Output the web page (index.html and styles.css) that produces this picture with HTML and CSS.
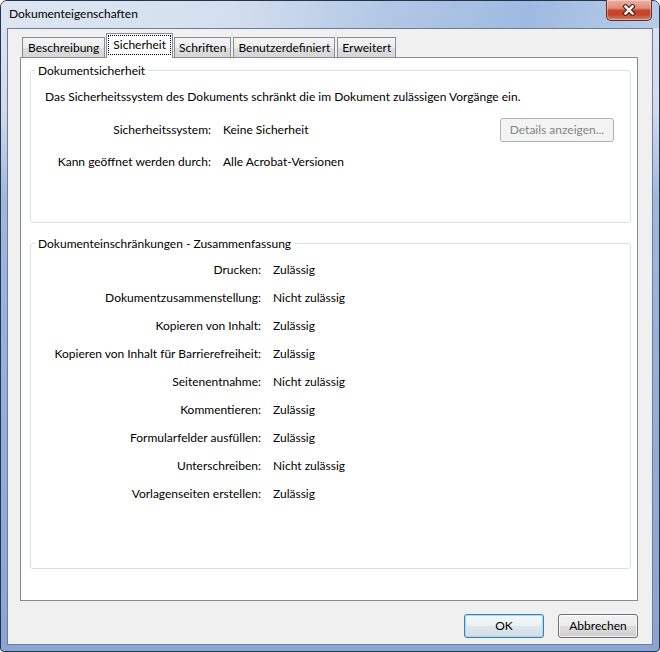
FILE: index.html
```html
<!DOCTYPE html>
<html lang="de">
<head>
    <meta charset="UTF-8">
    <meta name="viewport" content="width=device-width, initial-scale=1.0">
    <title>Dokumenteigenschaften</title>
    <link rel="stylesheet" href="styles.css">
</head>
<body>
    <div class="window">
        <div class="titlebar">
            <span class="title">Dokumenteigenschaften</span>
            <button class="close" aria-label="Schließen">
                <svg width="14" height="12" viewBox="0 0 14 12">
                    <path d="M3.5 2.5 L10.5 9.5 M10.5 2.5 L3.5 9.5" stroke="#5a2216" stroke-width="4.6" stroke-linecap="square"/>
                    <path d="M3.5 2.5 L10.5 9.5 M10.5 2.5 L3.5 9.5" stroke="#ffffff" stroke-width="2.4" stroke-linecap="square"/>
                </svg>
            </button>
        </div>

        <div class="client">
            <div class="tabs">
                <div class="tab">Beschreibung</div>
                <div class="tab active"><span class="focus">Sicherheit</span></div>
                <div class="tab">Schriften</div>
                <div class="tab">Benutzerdefiniert</div>
                <div class="tab">Erweitert</div>
            </div>

            <div class="panel">
                <div class="group group-security">
                    <span class="group-title">Dokumentsicherheit</span>
                    <p class="intro">Das Sicherheitssystem des Dokuments schränkt die im Dokument zulässigen Vorgänge ein.</p>
                    <div class="sec-grid">
                        <span class="label">Sicherheitssystem:</span>
                        <span>Keine Sicherheit</span>
                        <button class="details" disabled>Details anzeigen...</button>
                        <span class="label">Kann geöffnet werden durch:</span>
                        <span>Alle Acrobat-Versionen</span>
                    </div>
                </div>

                <div class="group group-summary">
                    <span class="group-title">Dokumenteinschränkungen - Zusammenfassung</span>
                    <div class="sum-grid">
                        <span class="label">Drucken:</span><span>Zulässig</span>
                        <span class="label">Dokumentzusammenstellung:</span><span>Nicht zulässig</span>
                        <span class="label">Kopieren von Inhalt:</span><span>Zulässig</span>
                        <span class="label">Kopieren von Inhalt für Barrierefreiheit:</span><span>Zulässig</span>
                        <span class="label">Seitenentnahme:</span><span>Nicht zulässig</span>
                        <span class="label">Kommentieren:</span><span>Zulässig</span>
                        <span class="label">Formularfelder ausfüllen:</span><span>Zulässig</span>
                        <span class="label">Unterschreiben:</span><span>Nicht zulässig</span>
                        <span class="label">Vorlagenseiten erstellen:</span><span>Zulässig</span>
                    </div>
                </div>
            </div>

            <div class="footer">
                <button class="btn default">OK</button>
                <button class="btn">Abbrechen</button>
            </div>
        </div>
    </div>
</body>
</html>
```

FILE: styles.css
```css
* {
    box-sizing: border-box;
}

body {
    margin: 0;
    width: 660px;
    height: 652px;
    overflow: hidden;
    font-family: Lato, "Open Sans", sans-serif;
    font-size: 12px;
    line-height: 16px;
    color: #000;
    background: #fff;
}

.window {
    width: 660px;
    height: 652px;
    display: flex;
    flex-direction: column;
    padding: 0 6px 6px 6px;
    border: 1px solid #243449;
    border-radius: 7px 7px 4px 4px;
    background: linear-gradient(to bottom, #dce6f2 0, #cfdbec 110px, #9fb7dd 200px, #8aa5d3 100%);
}

.titlebar {
    height: 27px;
    margin: 0 -6px;
    padding: 0 7px 0 8px;
    display: flex;
    justify-content: space-between;
    align-items: flex-start;
    border-radius: 6px 6px 0 0;
    background: linear-gradient(100deg, #dde7f3 0%, #d3dfee 35%, #b0c6e5 60%, #9fbae1 80%, #b8cce8 100%);
}

.title {
    padding-top: 5px;
}

.close {
    width: 46px;
    height: 21px;
    margin-top: -1px;
    padding: 0;
    display: flex;
    justify-content: center;
    align-items: center;
    border: 1px solid #6a2b20;
    border-top: none;
    border-radius: 0 0 5px 5px;
    background: linear-gradient(to bottom, #eab1a3 0, #df8f79 40%, #c8472c 52%, #c2432a 72%, #d9806a 100%);
    box-shadow: inset 0 0 0 1px rgba(255, 255, 255, 0.35);
}

.client {
    flex: 1;
    display: flex;
    flex-direction: column;
    padding: 4px 14px 0 12px;
    border: 1px solid #6b7d98;
    background: #f0f0f0;
}

/* tab strip */
.tabs {
    height: 24px;
    padding-left: 2px;
    display: flex;
    align-items: flex-end;
}

.tab {
    height: 20px;
    padding: 0 4px;
    margin-right: 2px;
    border: 1px solid #898c95;
    border-bottom: none;
    line-height: 19px;
    background: linear-gradient(to bottom, #f5f5f5 0, #ececec 50%, #dedede 51%, #d6d6d6 100%);
    white-space: nowrap;
}

.tab:first-child {
    padding: 0 5px;
}

.tab.active {
    position: relative;
    z-index: 1;
    height: 25px;
    margin: 0 1px -1px -1px;
    padding: 0 1px;
    background: #fff;
}

.tab.active .focus {
    display: block;
    height: 20px;
    margin-top: 1px;
    padding: 0 4px;
    line-height: 18px;
    border: 1px dotted #000;
}

/* tab page */
.panel {
    height: 544px;
    flex: none;
    padding: 12px 6px 0 9px;
    border: 1px solid #898c95;
    background: #fff;
}

.group {
    position: relative;
    border: 1px solid #d5dfe5;
    border-radius: 3px;
}

.group-title {
    position: absolute;
    top: -8px;
    left: 4px;
    padding: 0 3px;
    background: #fff;
    white-space: nowrap;
}

.group-security {
    height: 153px;
    padding: 18px 16px 0 14px;
}

.intro {
    margin: 0;
}

.sec-grid {
    display: grid;
    grid-template-columns: 166px auto 1fr;
    column-gap: 12px;
    row-gap: 12px;
    align-items: center;
    margin-top: 13px;
}

.label {
    text-align: right;
    white-space: nowrap;
}

.details {
    justify-self: end;
    width: 114px;
    height: 24px;
    padding: 0;
    font: inherit;
    color: #838383;
    border: 1px solid #adb2b5;
    border-radius: 3px;
    background: #f4f4f4;
}

.group-summary {
    height: 326px;
    margin-top: 20px;
    padding: 18px 0 0 14px;
}

.sum-grid {
    display: grid;
    grid-template-columns: 216px 1fr;
    column-gap: 12px;
    row-gap: 12px;
}

/* dialog buttons */
.footer {
    display: flex;
    justify-content: flex-end;
    gap: 14px;
    margin-top: 13px;
}

.btn {
    width: 80px;
    height: 24px;
    padding: 0;
    font: inherit;
    color: #000;
    border: 1px solid #707070;
    border-radius: 3px;
    background: linear-gradient(to bottom, #f2f2f2 0, #ebebeb 50%, #dddddd 51%, #cfcfcf 100%);
    box-shadow: inset 0 0 0 1px rgba(255, 255, 255, 0.75);
}

.btn.default {
    border-color: #3c7fb1;
    background: linear-gradient(to bottom, #f4f8fa 0, #eaf1f5 50%, #dde7ec 51%, #d3dde3 100%);
    box-shadow: inset 0 0 0 1px #9fe0f7;
}
```
